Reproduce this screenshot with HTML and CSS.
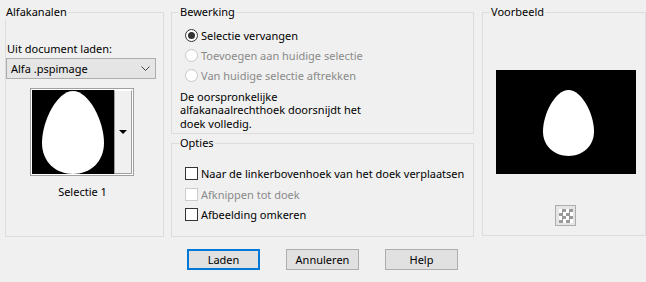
FILE: index.html
```html
<!DOCTYPE html>
<html>
<head>
<meta charset="utf-8">
<link rel="stylesheet" href="styles.css">
</head>
<body>
<div class="dialog">
  <div class="top">
    <fieldset class="group g-left">
      <legend class="lg-left">Alfakanalen</legend>
      <div class="lbl-doc">Uit document laden:</div>
      <div class="combo">
        <span>Alfa .pspimage</span>
        <svg class="chev" width="9" height="5" viewBox="0 0 9 5"><path d="M0.5 0.5 L4.5 4.5 L8.5 0.5" fill="none" stroke="#444" stroke-width="1"/></svg>
      </div>
      <div class="thumb-wrap">
        <div class="thumb">
          <div class="thumb-img">
            <svg width="62" height="83" viewBox="0 0 62 83"><path d="M31 0 C47 0 62 30 62 52 C62 71 48 83 31 83 C14 83 0 71 0 52 C0 30 15 0 31 0 Z" fill="#fff"/></svg>
          </div>
          <div class="thumb-btn"><span class="tri"></span></div>
        </div>
      </div>
      <div class="sel-name">Selectie 1</div>
    </fieldset>

    <div class="mid">
      <fieldset class="group g-bew">
        <legend class="lg">Bewerking</legend>
        <div class="opts">
          <div class="row"><span class="radio checked"></span><span>Selectie vervangen</span></div>
          <div class="row disabled"><span class="radio"></span><span>Toevoegen aan huidige selectie</span></div>
          <div class="row disabled"><span class="radio"></span><span>Van huidige selectie aftrekken</span></div>
        </div>
        <div class="desc">
          <div class="dl">De oorspronkelijke</div>
          <div class="dl">alfakanaalrechthoek doorsnijdt het</div>
          <div class="dl">doek volledig.</div>
        </div>
      </fieldset>
      <fieldset class="group g-opt">
        <legend class="lg">Opties</legend>
        <div class="opts">
          <div class="row crow"><span class="check"></span><span>Naar de linkerbovenhoek van het doek verplaatsen</span></div>
          <div class="row crow disabled"><span class="check"></span><span>Afknippen tot doek</span></div>
          <div class="row crow"><span class="check"></span><span>Afbeelding omkeren</span></div>
        </div>
      </fieldset>
    </div>

    <fieldset class="group g-right">
      <legend class="lg">Voorbeeld</legend>
      <div class="preview">
        <svg width="51" height="66" viewBox="0 0 62 83" preserveAspectRatio="none"><path d="M31 0 C47 0 62 30 62 52 C62 71 48 83 31 83 C14 83 0 71 0 52 C0 30 15 0 31 0 Z" fill="#fff"/></svg>
      </div>
      <div class="checker-btn"><span class="checker"></span></div>
    </fieldset>
  </div>

  <div class="buttons">
    <button class="btn default">Laden</button>
    <button class="btn">Annuleren</button>
    <button class="btn">Help</button>
  </div>
</div>
</body>
</html>
```

FILE: styles.css
```css
html, body {
  margin: 0;
  padding: 0;
  background: #f0f0f0;
}
body {
  font-family: "Noto Sans", "Open Sans", sans-serif;
  font-size: 11px;
  color: #000;
  width: 646px;
  height: 282px;
  overflow: hidden;
  white-space: nowrap;
}
.dialog {
  display: flex;
  flex-direction: column;
}
.top {
  display: flex;
  padding: 4px 0 0 5px;
  height: 233px;
  box-sizing: content-box;
}
.group {
  margin: 0;
  padding: 0;
  border: 1px solid #dcdcdc;
  min-width: 0;
  box-sizing: border-box;
}
legend {
  line-height: 16px;
  padding: 0 1px;
}
.lg-left {
  margin-left: -1px;
}
.lg {
  margin-left: 7px;
}
.g-left {
  width: 159px;
  height: 233px;
  display: flex;
  flex-direction: column;
}
.lbl-doc {
  margin: 21px 0 0 1px;
  line-height: 16px;
}
.combo {
  margin: 1px 0 0 0;
  width: 150px;
  height: 21px;
  box-sizing: border-box;
  border: 1px solid #adadad;
  background: #e5e5e5;
  display: flex;
  align-items: center;
  justify-content: space-between;
  padding: 0 5px 0 4px;
}
.chev {
  display: block;
}
.thumb-wrap {
  display: flex;
  margin: 9px 0 0 24px;
}
.thumb {
  width: 104px;
  height: 88px;
  box-sizing: border-box;
  border: 1px solid #a0a0a0;
  background: #fff;
  padding: 1px;
  display: flex;
}
.thumb-img {
  flex: 1;
  background: #000;
  border: 1px solid #000;
  display: flex;
  justify-content: center;
  align-items: center;
}
.thumb-img svg {
  display: block;
}
.thumb-btn {
  width: 18px;
  background: #f0f0f0;
  border: 1px solid #a0a0a0;
  border-top-color: #fff;
  box-sizing: border-box;
  display: flex;
  align-items: center;
  justify-content: center;
}
.tri {
  width: 0;
  height: 0;
  border-left: 4px solid transparent;
  border-right: 4px solid transparent;
  border-top: 4px solid #000;
}
.sel-name {
  margin-top: 8px;
  text-align: center;
  line-height: 16px;
  padding-right: 4px;
}
.mid {
  display: flex;
  flex-direction: column;
  margin-left: 7px;
  width: 303px;
  gap: 1px;
}
.g-bew {
  height: 131px;
}
.g-opt {
  height: 102px;
}
.opts {
  display: flex;
  flex-direction: column;
  padding-left: 13px;
}
.g-bew .opts {
  margin-top: 5px;
}
.row {
  display: flex;
  align-items: center;
  height: 20px;
  gap: 3px;
}
.row.disabled {
  color: #8a8a8a;
}
.radio {
  width: 13px;
  height: 13px;
  box-sizing: border-box;
  border-radius: 50%;
  border: 1px solid #333;
  background: #fff;
  position: relative;
  flex: none;
}
.radio.checked::after {
  content: "";
  position: absolute;
  left: 2px;
  top: 2px;
  width: 7px;
  height: 7px;
  border-radius: 50%;
  background: #333;
}
.row.disabled .radio {
  border-color: #c8c8c8;
}
.desc {
  margin: 5px 0 0 8px;
  display: flex;
  flex-direction: column;
}
.dl {
  height: 13.3px;
  line-height: 13px;
}
.g-opt .opts {
  margin-top: 12px;
}
.crow {
  height: 20.5px;
}
.check {
  width: 13px;
  height: 13px;
  box-sizing: border-box;
  border: 1px solid #333;
  background: #fff;
  flex: none;
}
.row.disabled .check {
  border-color: #cccccc;
}
.g-right {
  margin-left: 8px;
  width: 164px;
  height: 232px;
  display: flex;
  flex-direction: column;
  align-items: flex-start;
}
.preview {
  margin: 50px 0 0 13px;
  width: 140px;
  height: 104px;
  background: #000;
  display: flex;
  justify-content: center;
  padding-top: 20px;
  box-sizing: border-box;
}
.preview svg {
  display: block;
  margin-left: 5px;
}
.checker-btn {
  margin: 31px 0 0 72px;
  width: 21px;
  height: 21px;
  box-sizing: border-box;
  border: 1px solid #adadad;
  background: #e5e5e5;
  display: flex;
  align-items: center;
  justify-content: center;
}
.checker {
  width: 14px;
  height: 14px;
  background-color: #fff;
  background-image: conic-gradient(#9a9a9a 25%, #ffffff 25% 50%, #9a9a9a 50% 75%, #ffffff 75%);
  background-size: 7px 7px;
}
.buttons {
  display: flex;
  padding-left: 187px;
  margin-top: 12px;
  gap: 26px;
}
.btn {
  width: 73px;
  height: 21px;
  box-sizing: border-box;
  border: 1px solid #adadad;
  background: #e1e1e1;
  font-family: inherit;
  font-size: 11px;
  color: #000;
  padding: 0;
  margin: 0;
  line-height: 16px;
}
.btn.default {
  border: 2px solid #0078d7;
}
```
